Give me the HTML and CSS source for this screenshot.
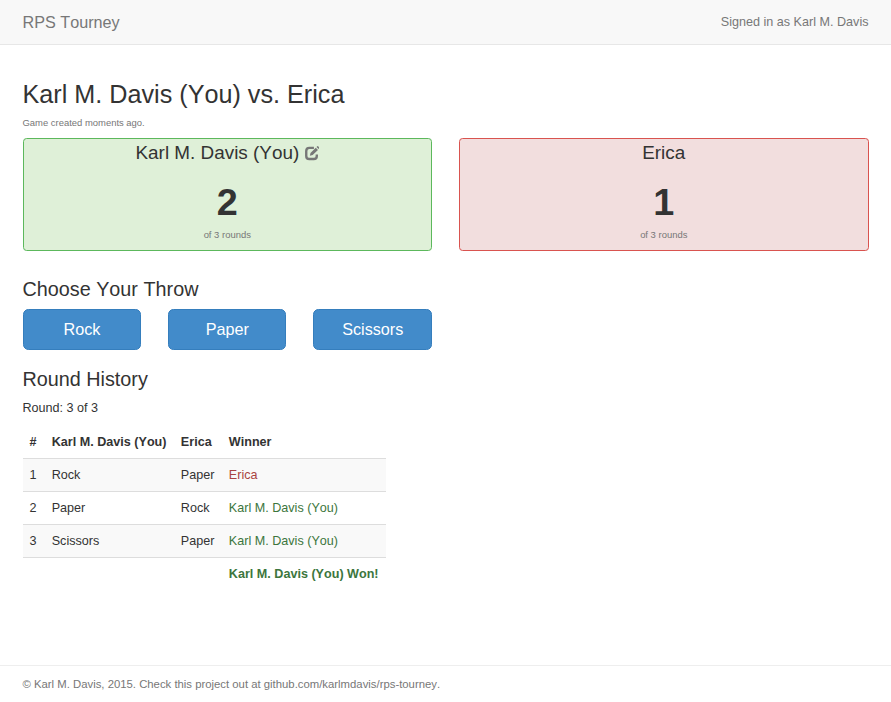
FILE: index.html
```html
<!DOCTYPE html>
<html lang="en">
<head>
<meta charset="utf-8">
<title>RPS Tourney</title>
<link rel="stylesheet" href="styles.css">
</head>
<body>
<nav class="navbar">
  <div class="container navbar-inner">
    <span class="brand">RPS Tourney</span>
    <span class="signed-in">Signed in as Karl M. Davis</span>
  </div>
</nav>
<main class="container main">
  <h1>Karl M. Davis (You) vs. Erica</h1>
  <p class="created">Game created moments ago.</p>
  <div class="players">
    <section class="player winning">
      <h3>Karl M. Davis (You) <svg class="edit" viewBox="0 0 14 14"><path d="M8.6 1.8H4.2Q1.2 1.8 1.2 4.8V9.6Q1.2 12.6 4.2 12.6H8.4Q11.4 12.6 11.4 9.6V8.3" fill="none" stroke="currentColor" stroke-width="2.3"/><path d="M4.7 9.4 5.3 6.7 10.4 1.7 12.5 3.8 7.4 8.8ZM11.1 1 11.9 .2Q12.3-.1 12.7 .3L13.8 1.4Q14.2 1.8 13.8 2.2L13.1 3Z" fill="currentColor"/></svg></h3>
      <p class="score">2</p>
      <p class="of">of 3 rounds</p>
    </section>
    <section class="player losing">
      <h3>Erica</h3>
      <p class="score">1</p>
      <p class="of">of 3 rounds</p>
    </section>
  </div>
  <h2 class="choose">Choose Your Throw</h2>
  <div class="throws">
    <button>Rock</button>
    <button>Paper</button>
    <button>Scissors</button>
  </div>
  <h2 class="history">Round History</h2>
  <p class="round">Round: 3 of 3</p>
  <table>
    <thead>
      <tr><th>#</th><th>Karl M. Davis (You)</th><th>Erica</th><th>Winner</th></tr>
    </thead>
    <tbody>
      <tr><td>1</td><td>Rock</td><td>Paper</td><td class="lost">Erica</td></tr>
      <tr><td>2</td><td>Paper</td><td>Rock</td><td class="won">Karl M. Davis (You)</td></tr>
      <tr><td>3</td><td>Scissors</td><td>Paper</td><td class="won">Karl M. Davis (You)</td></tr>
      <tr><td></td><td></td><td></td><td class="won final">Karl M. Davis (You) Won!</td></tr>
    </tbody>
  </table>
</main>
<footer>
  <div class="container">© Karl M. Davis, 2015. Check this project out at github.com/karlmdavis/rps-tourney.</div>
</footer>
</body>
</html>
```
FILE: styles.css
```css
* { box-sizing: border-box; font-kerning: none; }
body {
  margin: 0;
  height: 702px;
  display: flex;
  flex-direction: column;
  background: #fff;
  color: #333;
  font: 12.6px/18px "Liberation Sans", Arial, sans-serif;
}
h1, h2, h3, p { margin: 0; font-weight: 500; }
.container { width: 873px; margin: 0 auto; padding: 0 13.5px; }
.navbar { height: 45px; background: #f8f8f8; border-bottom: 1px solid #e7e7e7; color: #777; }
.navbar-inner { display: flex; justify-content: space-between; align-items: center; height: 44px; }
.brand { font-size: 16.2px; }
.main { flex: 1; }
h1 { margin-top: 35px; font-size: 25.2px; line-height: 28px; }
.created { margin-top: 6px; font-size: 9.45px; color: #777; }
.players { display: grid; grid-template-columns: 1fr 1fr; gap: 27px; margin-top: 6px; }
.player { height: 113px; border: 1px solid; border-radius: 3.6px; text-align: center; }
.winning { background: #dff0d8; border-color: #5cb85c; }
.losing { background: #f2dede; border-color: #d9534f; }
h3 { height: 28px; font-size: 18.9px; line-height: 28px; }
.edit { width: 14.5px; height: 14.5px; color: #777; vertical-align: -1.5px; }
.score { margin-top: 8px; font-size: 37.8px; line-height: 54px; font-weight: 700; }
.of { margin-top: -3px; font-size: 9.45px; color: #777; }
h2 { font-size: 19.8px; line-height: 22px; }
.choose { margin-top: 27px; }
.throws { display: grid; grid-template-columns: repeat(3, 118.3px); gap: 27.1px; margin-top: 9px; }
button {
  height: 41px;
  padding: 0 0 0 .6px;
  border: 1px solid #357ebd;
  border-radius: 5.4px;
  background: #428bca;
  color: #fff;
  font: 16.2px "Liberation Sans", Arial, sans-serif;
  font-kerning: none;
}
.history { margin-top: 18px; }
.round { margin-top: 9px; }
table { margin-top: 9px; border-collapse: collapse; }
th, td { height: 33px; padding: 7px 7.2px; text-align: left; line-height: 18px; }
th { height: 32px; }
th:first-child, td:first-child { padding-left: 7px; padding-right: 8px; }
td { border-top: 1px solid #ddd; }
tbody tr:nth-child(odd) { background: #f9f9f9; }
tbody tr:last-child { background: none; }
.lost { color: #a94442; }
.won { color: #3c763d; }
.final { font-weight: 700; }
footer { height: 37px; padding-top: 9px; border-top: 1px solid #eee; font-size: 11.34px; color: #777; }
```
